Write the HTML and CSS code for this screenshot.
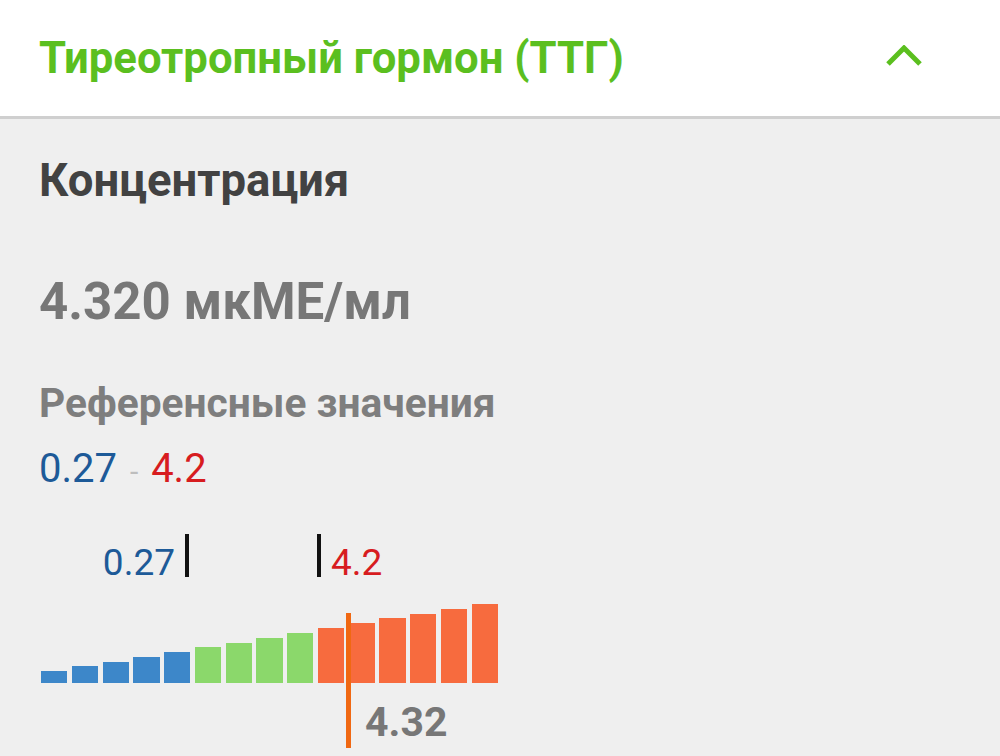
FILE: index.html
```html
<!DOCTYPE html>
<html lang="ru">

<head>
    <meta charset="utf-8">
    <meta name="viewport" content="width=device-width, initial-scale=1.0">

    <title>ТТГ</title>

    <link rel="stylesheet" href="styles.css">

</head>

<body>
    <header class="kort-top">
        <h1 class="kort-titel">Тиреотропный гормон (ТТГ)</h1>
        <svg class="pil" width="40" height="22" viewBox="0 0 40 22">
            <polyline points="4,19 20,3 36,19" fill="none" stroke="#5bbf1f" stroke-width="5" />
        </svg>
    </header>

    <section class="kort-indhold">
        <h2 class="overskrift">Концентрация</h2>
        <p class="resultat">4.320 мкМЕ/мл</p>

        <h3 class="ref-overskrift">Референсные значения</h3>
        <p class="ref-interval"><span class="lav">0.27</span> <span class="streg">-</span> <span class="hoj">4.2</span></p>

        <div class="graf">
            <div class="skala">
                <div class="mark" style="left: 144px;"><span class="mark-tal lav">0.27</span></div>
                <div class="mark" style="left: 276px;"><span class="mark-tal hoj hoejre">4.2</span></div>
            </div>

            <div class="soejler">
                <div class="soejle bla" style="height: 12px;"></div>
                <div class="soejle bla" style="height: 17px;"></div>
                <div class="soejle bla" style="height: 21px;"></div>
                <div class="soejle bla" style="height: 26px;"></div>
                <div class="soejle bla" style="height: 31px;"></div>
                <div class="soejle gron" style="height: 36px;"></div>
                <div class="soejle gron" style="height: 40px;"></div>
                <div class="soejle gron" style="height: 45px;"></div>
                <div class="soejle gron" style="height: 50px;"></div>
                <div class="soejle orange" style="height: 55px;"></div>
                <div class="soejle orange" style="height: 60px;"></div>
                <div class="soejle orange" style="height: 65px;"></div>
                <div class="soejle orange" style="height: 69px;"></div>
                <div class="soejle orange" style="height: 74px;"></div>
                <div class="soejle orange" style="height: 79px;"></div>
            </div>

            <div class="vaerdi-streg" style="left: 305px;"></div>
            <span class="vaerdi-tal" style="left: 324px;">4.32</span>
        </div>
    </section>

</body>

</html>
```

FILE: styles.css
```css
body {
    margin: 0;
    background: #efefef;
    font-family: Roboto, "Noto Sans", sans-serif;
    overflow: hidden;
}

.kort-top {
    display: flex;
    align-items: center;
    justify-content: space-between;
    height: 116px;
    padding: 0 76px 0 39px;
    background: #fff;
    border-bottom: 3px solid #cfcfcf;
}

.kort-titel {
    margin: 0;
    font-size: 43.7px;
    font-weight: 700;
    line-height: 116px;
    color: #5bbf1f;
}

.pil {
    display: block;
    margin-top: -4px;
}

.kort-indhold {
    padding-left: 39px;
}

.overskrift {
    margin: 32px 0 0;
    font-size: 45.5px;
    font-weight: 700;
    line-height: 60px;
    color: #424242;
}

.resultat {
    margin: 61px 0 0;
    font-size: 51px;
    font-weight: 700;
    line-height: 60px;
    color: #777;
}

.ref-overskrift {
    margin: 46px 0 0;
    font-size: 40.7px;
    font-weight: 700;
    line-height: 50px;
    color: #7e7e7e;
}

.ref-interval {
    margin: 16px 0 0;
    font-size: 40px;
    line-height: 50px;
}

.lav {
    color: #1d5a98;
}

.hoj {
    color: #d71c1f;
}

.streg {
    margin: 0 3px;
    color: #bdbdbd;
    font-size: 30px;
    line-height: 1;
}

.graf {
    position: relative;
    width: 457px;
    height: 216px;
    margin-left: 2px;
    padding-top: 40px;
}

.skala {
    position: relative;
    height: 43px;
}

.mark {
    position: absolute;
    top: 0;
    width: 4px;
    height: 43px;
    background: #111;
}

.mark-tal {
    position: absolute;
    right: calc(100% + 10px);
    bottom: -4px;
    font-size: 37px;
    line-height: 36px;
}

.mark-tal.hoejre {
    right: auto;
    left: calc(100% + 10px);
}

.soejler {
    display: flex;
    align-items: flex-end;
    gap: 4.5px;
    height: 79px;
    margin-top: 27px;
}

.soejle {
    flex: 1;
}

.bla {
    background: #3d87c9;
}

.gron {
    background: #8bd86b;
}

.orange {
    background: #f76b3e;
}

.vaerdi-streg {
    position: absolute;
    top: 119px;
    width: 4.5px;
    height: 135px;
    background: #f06812;
}

.vaerdi-tal {
    position: absolute;
    top: 208px;
    font-size: 41px;
    font-weight: 700;
    line-height: 40px;
    color: #777;
}
```
